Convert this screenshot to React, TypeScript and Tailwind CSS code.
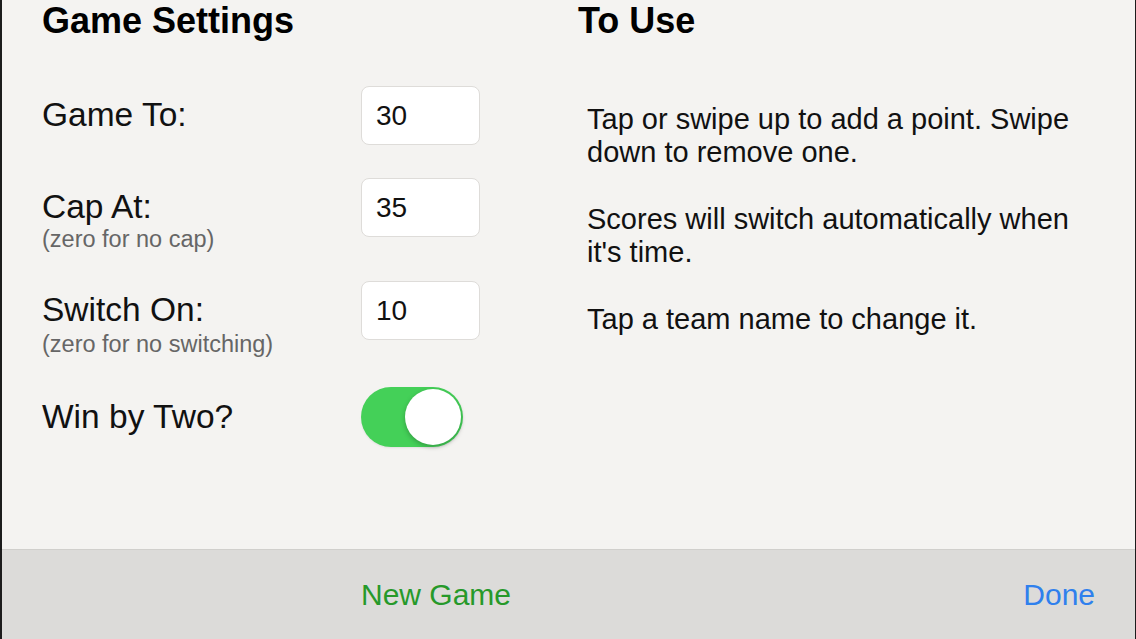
import React from "react";

const font = { fontFamily: '"Liberation Sans", Arial, sans-serif' };

function NumField({ value }: { value: string }) {
  return (
    <div className="w-[119px] h-[59px] rounded-[8px] bg-white border border-[#dedcd9] flex items-center pl-[14px] text-[28px] text-[#111]">
      {value}
    </div>
  );
}

function Toggle() {
  return (
    <div className="w-[102px] h-[60px] rounded-full bg-[#44d058] flex items-center justify-end pr-[2px] shadow-[0_1px_2px_rgba(0,0,0,0.08)]">
      <div className="w-[56px] h-[56px] rounded-full bg-white shadow-[0_2px_5px_rgba(0,0,0,0.25)]" />
    </div>
  );
}

export default function App() {
  return (
    <div
      className="w-[1136px] h-[639px] flex flex-col bg-[#f4f3f1] border-l-2 border-r border-[#1c1c1c] overflow-hidden"
      style={font}
    >
      <div className="flex-1 flex">
        <div className="w-[576px] pl-[40px] pt-[1px]">
          <h1 className="text-[36px] leading-[40px] font-bold text-black">Game Settings</h1>
          <div className="mt-[45px] flex items-start">
            <div className="w-[319px] h-[59px] flex items-center text-[33.5px] text-[#111]">Game To:</div>
            <NumField value="30" />
          </div>
          <div className="mt-[33px] flex items-start">
            <div className="w-[319px] flex flex-col">
              <div className="h-[59px] flex items-center text-[33.5px] text-[#111]">Cap At:</div>
              <div className="-mt-[11px] text-[23.5px] leading-[26px] text-[#666]">(zero for no cap)</div>
            </div>
            <NumField value="35" />
          </div>
          <div className="mt-[29px] flex items-start">
            <div className="w-[319px] flex flex-col">
              <div className="h-[59px] flex items-center text-[33.5px] text-[#111]">Switch On:</div>
              <div className="-mt-[9px] text-[23.5px] leading-[26px] text-[#666]">(zero for no switching)</div>
            </div>
            <NumField value="10" />
          </div>
          <div className="mt-[30px] flex items-center">
            <div className="w-[319px] text-[33.5px] text-[#111]">Win by Two?</div>
            <Toggle />
          </div>
        </div>
        <div className="flex-1 pt-[1px]">
          <h1 className="text-[36px] leading-[40px] font-bold text-black">To Use</h1>
          <div className="pl-[9px] w-[505px] mt-[62px] flex flex-col gap-[34px] text-[29px] leading-[33px] text-[#111]">
            <p>Tap or swipe up to add a point. Swipe down to remove one.</p>
            <p>Scores will switch automatically when it's time.</p>
            <p>Tap a team name to change it.</p>
          </div>
        </div>
      </div>
      <div className="h-[90px] bg-[#dcdbd9] border-t border-[#d0cfcc] flex items-center">
        <div className="w-[868px] flex justify-center">
          <span className="text-[30px] text-[#26992a]">New Game</span>
        </div>
        <div className="flex-1 flex justify-end pr-[40px]">
          <span className="text-[30px] text-[#2f80ed]">Done</span>
        </div>
      </div>
    </div>
  );
}
